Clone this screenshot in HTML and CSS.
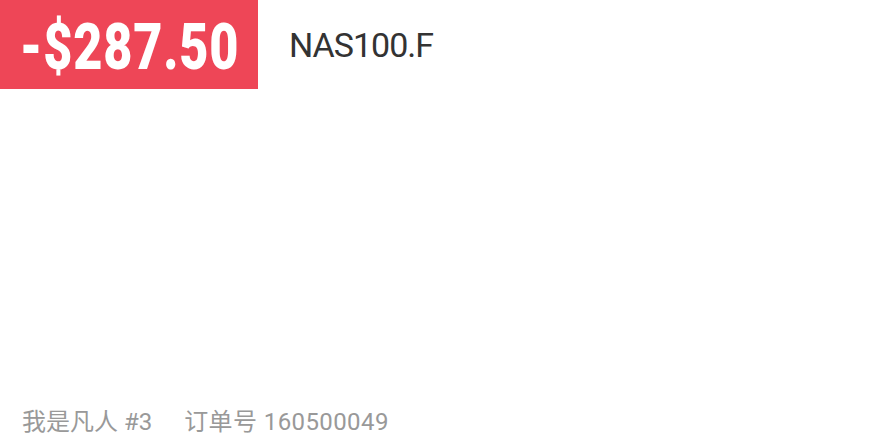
FILE: index.html
```html
<!DOCTYPE html>
<html lang="zh">
<head>
<meta charset="utf-8">
<link rel="stylesheet" href="styles.css">
</head>
<body>
<div class="card">
  <div class="header">
    <div class="pnl"><span class="pnl-text">-$287.50</span></div>
    <div class="symbol">NAS100.F</div>
  </div>
  <div class="footer">
    <span class="user">我是凡人 #3</span>
    <span class="order">订单号 160500049</span>
  </div>
</div>
</body>
</html>
```

FILE: styles.css
```css
html, body {
  margin: 0;
  padding: 0;
  background: #ffffff;
}
.card {
  width: 880px;
  height: 440px;
  display: flex;
  flex-direction: column;
  justify-content: space-between;
  font-family: "Roboto", "Noto Sans CJK SC", sans-serif;
}
.header {
  display: flex;
  align-items: center;
  height: 89px;
}
.pnl {
  background: #ee4657;
  width: 258px;
  height: 89px;
  display: flex;
  align-items: center;
  justify-content: center;
}
.pnl-text {
  display: inline-block;
  color: #ffffff;
  font-family: "Roboto", sans-serif;
  font-weight: 900;
  font-size: 65px;
  line-height: 66px;
  margin-top: 4px;
  letter-spacing: 1px;
  transform: scaleX(0.775);
}
.symbol {
  margin-left: 31px;
  color: #333333;
  font-size: 34px;
  letter-spacing: -1px;
}
.footer {
  display: flex;
  gap: 32px;
  padding: 0 0 2px 22px;
  color: #999999;
  font-size: 24px;
  line-height: 32px;
}
.order {
  letter-spacing: 0.4px;
}
```
